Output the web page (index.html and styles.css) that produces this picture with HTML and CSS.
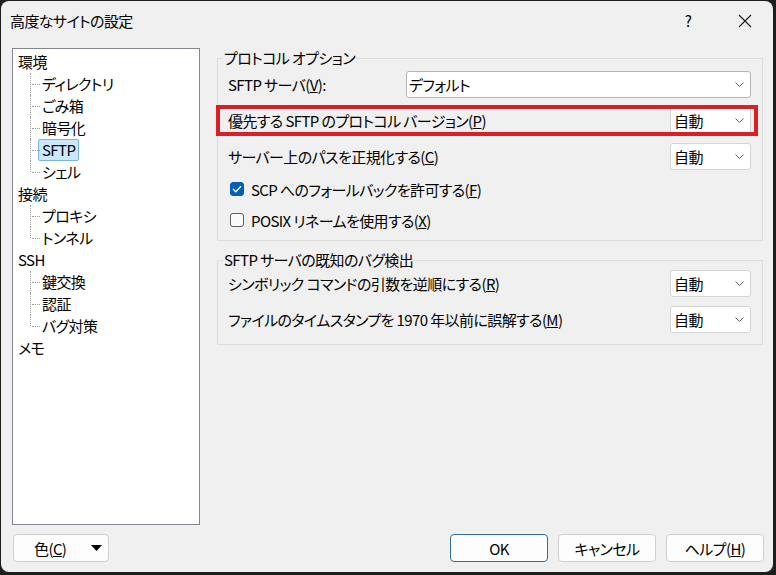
FILE: index.html
```html
<!DOCTYPE html>
<html lang="ja">
<head>
    <meta charset="UTF-8">
    <title>高度なサイトの設定</title>
    <link rel="stylesheet" href="styles.css">
</head>
<body>
    <div class="window">
        <div class="titlebar">
            <span class="title">高度なサイトの設定</span>
            <span class="help">?</span>
            <span class="close">
                <svg width="14" height="14" viewBox="0 0 14 14"><path d="M1 1L13 13M13 1L1 13" stroke="#1a1a1a" stroke-width="1.1" fill="none"/></svg>
            </span>
        </div>

        <div class="main">
            <div class="tree">
                <div class="node"><span>環境</span></div>
                <div class="node child"><span>ディレクトリ</span></div>
                <div class="node child"><span>ごみ箱</span></div>
                <div class="node child"><span>暗号化</span></div>
                <div class="node child"><span class="selected">SFTP</span></div>
                <div class="node child last"><span>シェル</span></div>
                <div class="node"><span>接続</span></div>
                <div class="node child"><span>プロキシ</span></div>
                <div class="node child last"><span>トンネル</span></div>
                <div class="node"><span>SSH</span></div>
                <div class="node child"><span>鍵交換</span></div>
                <div class="node child"><span>認証</span></div>
                <div class="node child last"><span>バグ対策</span></div>
                <div class="node"><span>メモ</span></div>
            </div>

            <div class="panel">
                <fieldset class="group first">
                    <legend>プロトコル オプション</legend>
                    <div class="row">
                        <span class="label">SFTP サーバ(<u>V</u>):</span>
                        <div class="combo wide">デフォルト<svg class="chev" width="9" height="5" viewBox="0 0 9 5"><path d="M0.5 0.5L4.5 4.5L8.5 0.5" stroke="#606060" fill="none"/></svg></div>
                    </div>
                    <div class="row marked">
                        <span class="label">優先する SFTP のプロトコル バージョン(<u>P</u>)</span>
                        <div class="combo">自動<svg class="chev" width="9" height="5" viewBox="0 0 9 5"><path d="M0.5 0.5L4.5 4.5L8.5 0.5" stroke="#606060" fill="none"/></svg></div>
                    </div>
                    <div class="row">
                        <span class="label">サーバー上のパスを正規化する(<u>C</u>)</span>
                        <div class="combo">自動<svg class="chev" width="9" height="5" viewBox="0 0 9 5"><path d="M0.5 0.5L4.5 4.5L8.5 0.5" stroke="#606060" fill="none"/></svg></div>
                    </div>
                    <div class="check">
                        <span class="box checked">
                            <svg width="10" height="8" viewBox="0 0 10 8"><path d="M1 4L3.8 6.8L9 1.2" stroke="#fff" stroke-width="1.3" fill="none"/></svg>
                        </span>
                        <span>SCP へのフォールバックを許可する(<u>F</u>)</span>
                    </div>
                    <div class="check">
                        <span class="box"></span>
                        <span>POSIX リネームを使用する(<u>X</u>)</span>
                    </div>
                </fieldset>

                <fieldset class="group second">
                    <legend>SFTP サーバの既知のバグ検出</legend>
                    <div class="row">
                        <span class="label">シンボリック コマンドの引数を逆順にする(<u>R</u>)</span>
                        <div class="combo">自動<svg class="chev" width="9" height="5" viewBox="0 0 9 5"><path d="M0.5 0.5L4.5 4.5L8.5 0.5" stroke="#606060" fill="none"/></svg></div>
                    </div>
                    <div class="row">
                        <span class="label">ファイルのタイムスタンプを 1970 年以前に誤解する(<u>M</u>)</span>
                        <div class="combo">自動<svg class="chev" width="9" height="5" viewBox="0 0 9 5"><path d="M0.5 0.5L4.5 4.5L8.5 0.5" stroke="#606060" fill="none"/></svg></div>
                    </div>
                </fieldset>
            </div>
        </div>

        <div class="footer">
            <button class="btn color">色(<u>C</u>)<svg width="11" height="6" viewBox="0 0 11 6"><path d="M0 0H11L5.5 6Z" fill="#000"/></svg></button>
            <span class="spacer"></span>
            <button class="btn ok">OK</button>
            <button class="btn">キャンセル</button>
            <button class="btn">ヘルプ(<u>H</u>)</button>
        </div>
    </div>
</body>
</html>
```

FILE: styles.css
```css
body {
    margin: 0;
    background: #1e1e1e;
    font-family: "Noto Sans CJK JP", sans-serif;
    font-size: 15px;
    font-feature-settings: "palt";
    letter-spacing: -0.6px;
    color: #000;
}
.window {
    width: 772px;
    height: 571px;
    margin: 1px 0 0 1px;
    background: #f0f0f0;
    border-radius: 8px;
    display: flex;
    flex-direction: column;
    overflow: hidden;
}
.titlebar {
    height: 39px;
    display: flex;
    align-items: center;
    padding-left: 9px;
}
.help {
    margin-left: auto;
    width: 46px;
    text-align: center;
}
.close {
    width: 46px;
    margin: 0 5px 0 11px;
    display: flex;
    justify-content: center;
}
.main {
    display: flex;
    padding: 8px 10px 0 11px;
    height: 477px;
}
.tree {
    width: 188px;
    height: 477px;
    box-sizing: border-box;
    border: 1px solid #828790;
    background: #fff;
    padding-top: 2px;
}
.node {
    position: relative;
    height: 22px;
    display: flex;
    align-items: center;
    padding-left: 1px;
}
.node span {
    line-height: 20px;
    padding: 0 3px;
    border: 1px solid transparent;
    border-radius: 2px;
}
.node span.selected {
    background: #cce8ff;
    border-color: #7ab3e6;
}
.child {
    padding-left: 25px;
}
.child::before {
    content: '';
    position: absolute;
    left: 17px;
    top: 0;
    height: 100%;
    border-left: 1px dotted #a0a0a0;
}
.child.last::before {
    height: 11px;
}
.child::after {
    content: '';
    position: absolute;
    left: 19px;
    top: 11px;
    width: 8px;
    border-top: 1px dotted #a0a0a0;
}
.panel {
    margin-left: 17px;
    width: 546px;
}
.group {
    margin: 0;
    border: 1px solid #dcdcdc;
    padding: 3px 11px 8px 10px;
}
.group legend {
    line-height: 20px;
    padding: 0 1px;
    margin-left: -5px;
}
.group.second {
    margin-top: 9px;
    padding-top: 0;
    padding-bottom: 11px;
}
.row {
    height: 27px;
    display: flex;
    align-items: center;
}
.row + .row {
    margin-top: 9px;
}
.label {
    flex: 1;
}
.combo {
    width: 81px;
    height: 27px;
    box-sizing: border-box;
    background: #fff;
    border: 1px solid #d5d5d5;
    border-radius: 3px;
    display: flex;
    align-items: center;
    padding: 0 6px 0 3px;
}
.combo.wide {
    width: 345px;
    border-color: #b5b5b5;
    padding-left: 2px;
}
.chev {
    margin-left: auto;
}
.marked {
    margin-left: -10px;
    margin-right: -5px;
    padding-left: 10px;
    padding-right: 5px;
    outline: 4px solid #dc1f26;
    outline-offset: -2px;
}
.check {
    height: 24px;
    display: flex;
    align-items: center;
    margin-top: 7px;
}
.box {
    width: 14px;
    height: 14px;
    box-sizing: border-box;
    margin: 0 7px 0 2px;
    border: 1px solid #5f5f5f;
    border-radius: 3px;
    background: #fafafa;
    display: flex;
    align-items: center;
    justify-content: center;
}
.box.checked {
    background: #005fb8;
    border-color: #005fb8;
}
.footer {
    display: flex;
    gap: 10px;
    padding: 9px 9px 0 12px;
}
.spacer {
    flex: 1;
}
.btn {
    width: 98px;
    height: 28px;
    box-sizing: border-box;
    border: 1px solid #d0d0d0;
    border-radius: 4px;
    background: #fdfdfd;
    font: inherit;
    letter-spacing: inherit;
    padding: 0;
}
.btn.ok {
    border-color: #2f6ea5;
}
.btn.color {
    width: 96px;
    display: flex;
    align-items: center;
    padding: 0 6px 0 20px;
}
.btn.color svg {
    margin-left: auto;
}
```
